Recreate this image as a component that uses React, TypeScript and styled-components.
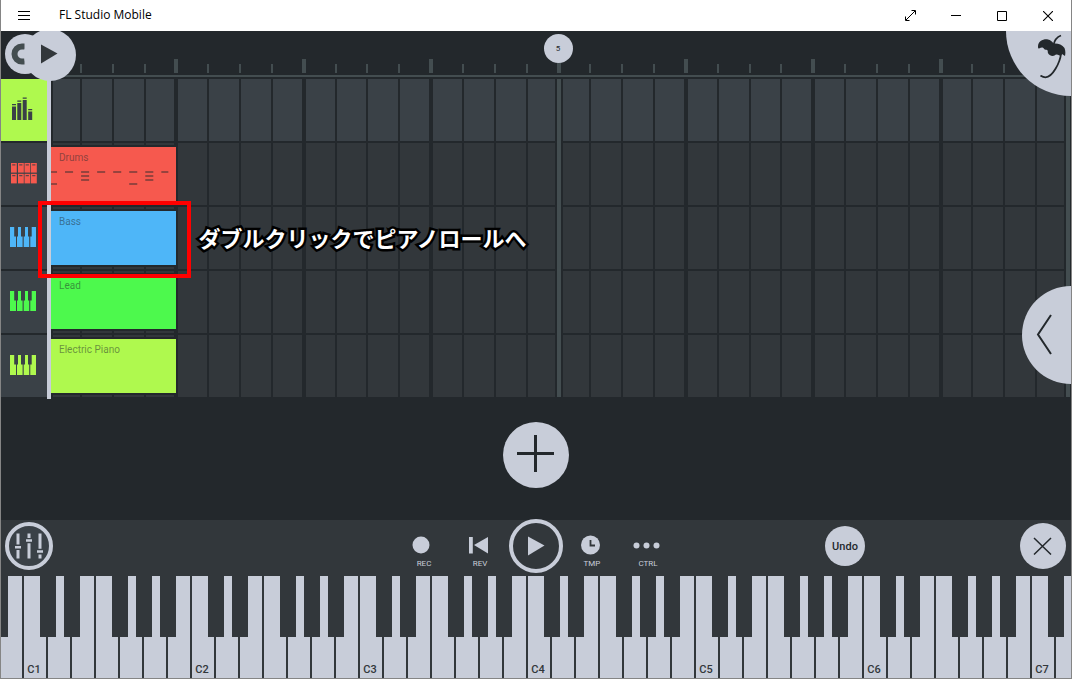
import React from "react";
import styled, { createGlobalStyle, css } from "styled-components";

const c = {
  dark: "#23282c",
  panel: "#32373b",
  raised: "#3a4147",
  line: "#434d50",
  light: "#c8cdd9",
};

const GlobalStyle = createGlobalStyle`
  *, *::before, *::after { box-sizing: border-box; }
  body { margin: 0; font-family: Roboto, "Liberation Sans", sans-serif; }
  button { padding: 0; border: 0; background: none; font: inherit; cursor: pointer; }
  svg { display: block; }
`;

const Frame = styled.div`
  display: flex;
  flex-direction: column;
  min-height: 100vh;
  overflow: hidden;
  border: solid #858585;
  border-width: 0 1px 1px;
  background: ${c.dark};
`;

const TitleBar = styled.header`
  display: flex;
  align-items: center;
  height: 31px;
  background: #fff;
  color: #000;
`;

const TitleButton = styled.button`
  display: grid;
  place-items: center;
  width: 46px;
  height: 31px;
`;

const Title = styled.h1`
  flex: 1;
  margin: 0;
  padding: 0 0 2px 12px;
  font: 400 12px/16px "Open Sans", "Noto Sans", sans-serif;
`;

const Arranger = styled.main`
  position: relative;
  flex: 1;
  display: flex;
  flex-direction: column;
`;

const Ruler = styled.div`
  display: flex;
  height: 48px;
  padding: 0 3px 0 48px;
`;

const RulerScale = styled.div`
  position: relative;
  flex: 1;
  display: grid;
  grid-template-columns: repeat(32, 1fr);
  align-items: end;
  padding-bottom: 6px;

  &::after {
    content: "";
    position: absolute;
    left: 0;
    right: -3px;
    bottom: 2px;
    height: 2px;
    background: ${c.line};
  }
`;

const Tick = styled.span<{ $bar: boolean }>`
  width: ${(p) => (p.$bar ? 4 : 2)}px;
  height: ${(p) => (p.$bar ? 14 : 9)}px;
  margin-left: ${(p) => (p.$bar ? -2 : -1)}px;
  background: ${c.line};
`;

const Marker = styled.span`
  position: absolute;
  left: 50%;
  top: 3px;
  width: 29px;
  height: 29px;
  margin-left: -15px;
  border-radius: 50%;
  background: ${c.light};
  color: ${c.dark};
  font-size: 8px;
  line-height: 29px;
  text-align: center;
`;

const TrackRow = styled.section`
  display: flex;
  height: 64px;
  padding: 0 3px 2px 0;
`;

const TrackHead = styled.button<{ $bg: string; $fg: string }>`
  display: grid;
  place-items: center;
  width: 46px;
  margin-right: 2px;
  padding-bottom: 2px;
  background: ${(p) => p.$bg};
  color: ${(p) => p.$fg};
`;

const songLine = css`
  content: "";
  position: absolute;
  top: 0;
  bottom: -2px;
  width: 4px;
  background: ${c.line};
`;

const Lane = styled.div`
  position: relative;
  flex: 1;
  display: grid;
  grid-template-columns: repeat(32, 1fr);

  &::before {
    ${songLine}
    left: 50%;
    margin-left: -2px;
  }
  &::after {
    ${songLine}
    right: -2px;
  }
  ${TrackRow}:last-of-type > &::before,
  ${TrackRow}:last-of-type > &::after {
    bottom: 0;
  }
`;

const Beat = styled.span<{ $left: number; $right: number; $master: boolean }>`
  border: solid ${c.dark};
  border-width: 0 ${(p) => p.$right}px 0 ${(p) => p.$left}px;
  background: ${(p) => (p.$master ? c.raised : c.panel)};
`;

const Clip = styled.div<{ $color: string }>`
  position: absolute;
  left: 2px;
  top: 4px;
  width: calc(12.5% - 2px);
  height: 54px;
  padding: 3px 8px;
  background: ${(p) => p.$color};
  box-shadow: 0 0 0 2px ${c.dark};
  color: rgba(35, 40, 44, 0.5);
  font-size: 10px;
  line-height: 16px;
  white-space: nowrap;

  svg {
    position: absolute;
    inset: 0;
    width: 100%;
    height: 100%;
  }
`;

const Highlight = styled.div`
  position: absolute;
  z-index: 3;
  left: -11px;
  top: -6px;
  width: calc(12.5% + 26px);
  height: 77px;
  border: 4px solid #f00;
`;

const Callout = styled.p`
  position: absolute;
  z-index: 3;
  left: calc(12.5% + 22px);
  top: 14px;
  margin: 0;
  color: #fff;
  font: 700 22px/32px "Noto Sans CJK JP", sans-serif;
  white-space: nowrap;
  -webkit-text-stroke: 5px #000;
  paint-order: stroke fill;
`;

const Playhead = styled.div`
  position: absolute;
  z-index: 2;
  left: 46px;
  top: 40px;
  width: 4px;
  height: 328px;
  background: ${c.light};
`;

const RoundButton = styled.button<{ $size: number }>`
  flex: none;
  display: grid;
  place-items: center;
  width: ${(p) => p.$size}px;
  height: ${(p) => p.$size}px;
  border-radius: 50%;
  background: ${c.light};
  color: ${c.dark};
`;

const TopClip = styled.div`
  position: absolute;
  z-index: 2;
  left: 4px;
  top: 0;
  width: 72px;
  height: 52px;
  overflow: hidden;
`;

const LoopButton = styled(RoundButton)`
  position: absolute;
  left: 0;
  top: 3px;
  color: ${c.line};
`;

const PlayHandle = styled(RoundButton)`
  position: absolute;
  left: 19px;
  top: -2px;
  padding: 0 3px 2px 0;
  color: ${c.panel};
`;

const FruitButton = styled.button`
  position: absolute;
  z-index: 2;
  right: 0;
  top: 0;
  width: 65px;
  height: 65px;
  border-bottom-left-radius: 100%;
  background: ${c.light};
  color: ${c.dark};
`;

const DrawerButton = styled.button`
  position: absolute;
  z-index: 2;
  right: 0;
  top: 255px;
  display: grid;
  align-items: center;
  width: 49px;
  height: 98px;
  padding-left: 14px;
  border-radius: 49px 0 0 49px;
  background: ${c.light};
  color: ${c.dark};
`;

const AddArea = styled.div`
  flex: 1;
  display: grid;
  place-items: center;
  padding-bottom: 9px;
`;

const Toolbar = styled.div`
  display: grid;
  grid-template-columns: 1fr auto 1fr;
  align-items: center;
  height: 56px;
  background: ${c.panel};
`;

const ToolbarSide = styled.div`
  display: flex;
  align-items: center;
  padding: 0 5px 4px 4px;
`;

const ToolbarEnd = styled(ToolbarSide)`
  justify-content: space-between;
  padding-left: 0;

  &::before {
    content: "";
  }
`;

const MixerButton = styled(RoundButton)`
  border: 4px solid ${c.light};
  background: ${c.raised};
  color: ${c.light};
`;

const UndoButton = styled(RoundButton)`
  margin-right: 6px;
  font-size: 11px;
  font-weight: 500;
`;

const Transport = styled.div`
  display: flex;
  align-items: center;
  height: 56px;
`;

const TransportButton = styled.button`
  display: flex;
  flex-direction: column;
  align-items: center;
  gap: 4px;
  width: 56px;
  padding-top: 8px;
  color: ${c.light};
  font-size: 8px;
  line-height: 10px;

  svg {
    margin-right: 4px;
  }
`;

const PlayButton = styled(RoundButton)`
  margin: 0 1px 4px;
  border: 4px solid ${c.light};
  background: ${c.panel};
  color: ${c.light};
`;

const Keyboard = styled.div`
  display: flex;
  height: 102px;
  margin-left: -1px;
  background: ${c.panel};
`;

const Key = styled.button<{ $sharp: boolean }>`
  position: relative;
  flex: none;
  display: flex;
  align-items: flex-end;
  justify-content: center;
  width: 24px;
  padding: 0 2px 1px 0;
  border-right: 2px solid ${c.panel};
  background: ${c.light};
  color: ${c.panel};
  font-size: 11px;
  font-weight: 500;
  line-height: 14px;

  ${(p) =>
    p.$sharp &&
    css`
      &::before {
        content: "";
        position: absolute;
        z-index: 1;
        left: -8px;
        top: 0;
        width: 16px;
        height: 61px;
        background: ${c.panel};
      }
    `}
`;

const MixerBarsIcon = () => (
  <svg width="24" height="24" viewBox="0 0 24 24" fill="currentColor">
    <path d="M0 7h4v1.300H0zM0 9.500h4V23H0zM5.300 3.500h4v1.300h-4zM5.300 6h4v17h-4zM10.700 0.500h4v1.300h-4zM10.700 3h4v20h-4zM16.200 12h4v1.300h-4zM16.200 14.500h4V23h-4z" />
  </svg>
);

const PadsIcon = () => (
  <svg width="26" height="21" viewBox="0 0 26 21">
    {[0, 7, 13.500, 20].map((x) =>
      [0, 10.800].map((y) => (
        <g key={`${x}-${y}`}>
          <rect x={x} y={y} width="5.800" height="9.600" fill="currentColor" />
          <rect x={x + 1.200} y={y + 1.400} width="3.200" height="1" fill={c.raised} />
        </g>
      ))
    )}
  </svg>
);

const PianoIcon = () => (
  <svg width="28" height="20" viewBox="0 0 28 20" fill="currentColor">
    <path d="M0 0h4.200v9.500H6V20H0zM8 0h3v9.500h1.600V20H7V9.500h1zM15 0h3v9.500h1.200V20h-5.500V9.500H15zM21.700 0H26v20h-5.700V9.500h1.400z" />
  </svg>
);

const DrumNotes = () => (
  <svg viewBox="0 0 125 54" preserveAspectRatio="none" stroke="rgba(35,40,44,0.45)" strokeWidth="2">
    <path d="M0 25h6M14 25h8M30 25h8M46 25h8M62 25h8M78 25h8M94 25h8M110 25h7M30 29h8M94 29h8M30 33h8M94 33h8M0 37h6M78 37h8" />
  </svg>
);

const TriangleIcon = () => (
  <svg width="18" height="20" viewBox="0 0 18 20" fill="currentColor">
    <path d="M1 0.500L17.500 9.500L1 19.500z" />
  </svg>
);

const LoopIcon = () => (
  <svg width="28" height="22" viewBox="0 0 28 22" fill="none" stroke="currentColor">
    <path d="M13.500 3.500H11a7.200 7.200 0 0 0 0 15h2.500" strokeWidth="6" />
  </svg>
);

const PalmIcon = () => (
  <svg width="65" height="65" viewBox="0 0 65 65">
    <path
      fill="currentColor"
      d="M32 15.500C32 10 38 7.500 42 8.500C44.500 9 46 10.500 47.500 12.500C51 12 56 13 58.500 17C59.700 20 59.500 23 59 25C58 24.500 57 23.800 56 23C55.500 24 54.500 25 53.500 24.500C51.500 23.500 50 23 48.500 24.500C46.500 25.500 42.500 24.500 41.800 21.500C42 20 41.500 18.500 40 18.800C38 19 38 17 36.500 16.500C35 16 33.500 17.500 32.500 17.500C32 17 32 16 32 15.500z"
    />
    <path
      fill="none"
      stroke="currentColor"
      strokeWidth="1.800"
      d="M55 4.500C51 6 48.500 9 47.500 14M55 23C54 31 47 46 39.500 46.300C37 46.300 36 45.500 34.500 44.500"
    />
  </svg>
);

const beats = Array.from({ length: 32 }, (_, i) => i);

const Beats = ({ master = false }: { master?: boolean }) => (
  <>
    {beats.map((i) => (
      <Beat
        key={i}
        $master={master}
        $left={i === 0 || i === 16 ? 4 : i % 4 === 0 ? 2 : 1}
        $right={i === 15 || i === 31 ? 4 : i % 4 === 3 ? 2 : 1}
      />
    ))}
  </>
);

const tracks = [
  { name: "Drums", color: "#f6594e", icon: <PadsIcon />, notes: <DrumNotes /> },
  { name: "Bass", color: "#4eb6f8", icon: <PianoIcon /> },
  { name: "Lead", color: "#4df94d", icon: <PianoIcon /> },
  { name: "Electric Piano", color: "#aff94e", icon: <PianoIcon /> },
];

const notes = ["C", "D", "E", "F", "G", "A", "B"];
const sharpBefore = "DEGAB";
const keys = Array.from({ length: 45 }, (_, i) => {
  const note = notes[(i + 6) % 7];
  return { note, octave: Math.floor((i + 6) / 7) };
});

export default function App() {
  return (
    <>
      <GlobalStyle />
      <Frame>
        <TitleBar>
          <TitleButton aria-label="Menu">
            <svg width="12" height="10" viewBox="0 0 12 10" stroke="#000">
              <path d="M0 0.500h12M0 4.500h12M0 8.500h12" />
            </svg>
          </TitleButton>
          <Title>FL Studio Mobile</Title>
          <TitleButton aria-label="Full screen">
            <svg width="11" height="11" viewBox="0 0 11 11" fill="none" stroke="#000">
              <path d="M1 10L10 1M6.500 0.500h4v4M0.500 6.500v4h4" />
            </svg>
          </TitleButton>
          <TitleButton aria-label="Minimize">
            <svg width="10" height="1" viewBox="0 0 10 1">
              <path d="M0 0h10v1H0z" />
            </svg>
          </TitleButton>
          <TitleButton aria-label="Maximize">
            <svg width="10" height="10" viewBox="0 0 10 10" fill="none" stroke="#000">
              <path d="M0.500 0.500h9v9h-9z" />
            </svg>
          </TitleButton>
          <TitleButton aria-label="Close">
            <svg width="10" height="10" viewBox="0 0 10 10" stroke="#000" strokeWidth="1.100">
              <path d="M0 0L10 10M10 0L0 10" />
            </svg>
          </TitleButton>
        </TitleBar>

        <Arranger>
          <Ruler>
            <RulerScale>
              {beats.map((i) => (
                <Tick key={i} $bar={i % 4 === 0} />
              ))}
              <Marker>5</Marker>
            </RulerScale>
          </Ruler>

          <TrackRow>
            <TrackHead $bg="#aff94e" $fg={c.raised} aria-label="Master">
              <MixerBarsIcon />
            </TrackHead>
            <Lane>
              <Beats master />
            </Lane>
          </TrackRow>
          {tracks.map((t) => (
            <TrackRow key={t.name}>
              <TrackHead $bg={c.raised} $fg={t.color} aria-label={`${t.name} track`}>
                {t.icon}
              </TrackHead>
              <Lane>
                <Beats />
                <Clip $color={t.color}>
                  {t.name}
                  {t.notes}
                </Clip>
                {t.name === "Bass" && (
                  <>
                    <Highlight />
                    <Callout lang="ja">ダブルクリックでピアノロールへ</Callout>
                  </>
                )}
              </Lane>
            </TrackRow>
          ))}

          <Playhead />
          <TopClip>
            <LoopButton $size={40} aria-label="Loop">
              <LoopIcon />
            </LoopButton>
            <PlayHandle $size={52} aria-label="Play from here">
              <TriangleIcon />
            </PlayHandle>
          </TopClip>
          <FruitButton aria-label="Home">
            <PalmIcon />
          </FruitButton>
          <DrawerButton aria-label="Open panel">
            <svg width="18" height="42" viewBox="0 0 18 42" fill="none" stroke="currentColor" strokeWidth="2">
              <path d="M15 1L2 20.500L15 40" />
            </svg>
          </DrawerButton>

          <AddArea>
            <RoundButton $size={66} aria-label="Add track">
              <svg width="40" height="40" viewBox="0 0 40 40" fill="currentColor">
                <path d="M18 0h3v37h-3zM1 17h37v3H1z" />
              </svg>
            </RoundButton>
          </AddArea>
        </Arranger>

        <Toolbar>
          <ToolbarSide>
            <MixerButton $size={48} aria-label="Mixer">
              <svg width="28" height="26" viewBox="0 0 28 26" fill="currentColor">
                <path d="M1.500 0.500h3v11h-3zM0 13h6v2.500H0zM1.500 17h3v8.500h-3zM12.500 0.500h3V5h-3zM11 6.300h6v2.500h-6zM12.500 10.300h3v15.200h-3zM23.500 0.500h3v15.200h-3zM22 17.200h6v2.500h-6zM23.500 21.500h3v4h-3z" />
              </svg>
            </MixerButton>
          </ToolbarSide>
          <Transport>
            <TransportButton>
              <svg width="20" height="20" viewBox="0 0 20 20" fill="currentColor">
                <circle cx="9" cy="10" r="8.500" />
              </svg>
              REC
            </TransportButton>
            <TransportButton>
              <svg width="20" height="20" viewBox="0 0 20 20" fill="currentColor">
                <path d="M1 2h3.800v16.500H1zM20 2v16.500L6 10z" />
              </svg>
              REV
            </TransportButton>
            <PlayButton $size={54} aria-label="Play">
              <TriangleIcon />
            </PlayButton>
            <TransportButton>
              <svg width="20" height="20" viewBox="0 0 20 20">
                <circle cx="10.500" cy="10" r="9.500" fill="currentColor" />
                <path d="M10.500 5v5.500h4.500" fill="none" stroke={c.panel} strokeWidth="1.800" />
              </svg>
              TMP
            </TransportButton>
            <TransportButton>
              <svg width="28" height="20" viewBox="0 0 28 20" fill="currentColor">
                <circle cx="4.500" cy="10.500" r="3" />
                <circle cx="14.500" cy="10.500" r="3" />
                <circle cx="24.500" cy="10.500" r="3" />
              </svg>
              CTRL
            </TransportButton>
          </Transport>
          <ToolbarEnd>
            <UndoButton $size={40}>Undo</UndoButton>
            <RoundButton $size={46} aria-label="Close keyboard">
              <svg width="20" height="18" viewBox="0 0 20 18" stroke="currentColor" strokeWidth="1.500">
                <path d="M1 1L18 17.500M18 1L1 17.500" />
              </svg>
            </RoundButton>
          </ToolbarEnd>
        </Toolbar>

        <Keyboard>
          {keys.map(({ note, octave }) => (
            <Key
              key={note + octave}
              $sharp={sharpBefore.includes(note)}
              aria-label={note + octave}
            >
              {note === "C" && `C${octave}`}
            </Key>
          ))}
        </Keyboard>
      </Frame>
    </>
  );
}
